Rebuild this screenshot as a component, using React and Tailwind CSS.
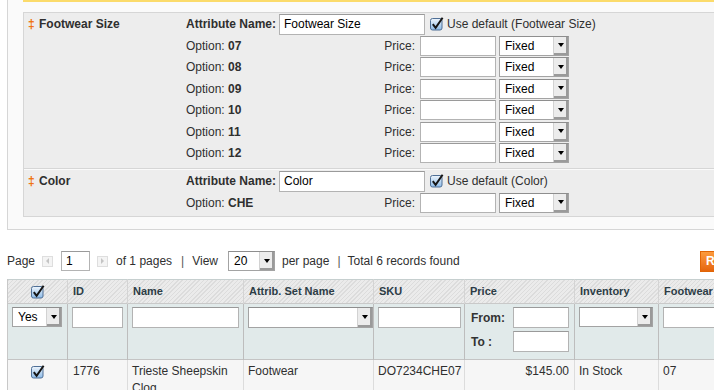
import React from "react";

function Check() {
  return (
    <svg width="14" height="14" viewBox="0 0 14 14" className="shrink-0">
      <defs>
        <linearGradient id="cbg" x1="0" y1="0" x2="0" y2="1">
          <stop offset="0" stopColor="#eef5fc" />
          <stop offset="1" stopColor="#8dbbe8" />
        </linearGradient>
      </defs>
      <rect x="0.5" y="1.5" width="11.5" height="11.5" rx="2" fill="url(#cbg)" stroke="#4f6f96" />
      <path d="M2.8 7.2 L5.6 10.8 L12.6 0.8" fill="none" stroke="#151515" strokeWidth="2" />
    </svg>
  );
}

function Sel({ className, text }) {
  return (
    <div className={"flex items-stretch bg-white border border-[#a3a3a3] border-t-[#8e8e8e] " + className}>
      <div className="flex-1 flex items-center pl-[5px] text-[12px] text-black leading-none">{text}</div>
      <div className="w-[15px] flex items-center justify-center bg-[#ececec] border-l border-[#d2d2d2] shadow-[inset_-2px_-2px_0_#9a9a9a]">
        <div className="w-0 h-0 border-l-[3px] border-r-[3px] border-t-[4px] border-l-transparent border-r-transparent border-t-black -mt-[1px] -ml-[1px]" />
      </div>
    </div>
  );
}

function Inp({ className, value }) {
  return (
    <div className={"bg-white border border-[#b3b3b3] border-t-[#9a9a9a] flex items-center pl-[4px] text-[12px] text-black leading-none " + className}>
      {value}
    </div>
  );
}

function OptionRow({ code }) {
  return (
    <div className="flex items-center h-[21.5px]">
      <span className="w-[195px]">
        Option: <b>{code}</b>
      </span>
      <span className="w-[34px] text-right">Price:</span>
      <Inp className="ml-[5px] w-[76px] h-[20px]" />
      <Sel className="ml-[3px] w-[70px] h-[20px]" text="Fixed" />
    </div>
  );
}

function Section({ title, attr, options, extra }) {
  return (
    <div className={"flex " + extra}>
      <div className="w-[162px] pl-[4px] h-[21.5px] flex items-center font-bold">
        <span className="text-[#f0700a] w-[11px] text-[12px]">‡</span>
        <span>{title}</span>
      </div>
      <div className="flex flex-col">
        <div className="flex items-center h-[21.5px]">
          <span className="w-[93px] font-bold">Attribute Name:</span>
          <Inp className="w-[146px] h-[21px]" value={attr} />
          <span className="ml-[5px] mr-[3px] flex items-center">
            <Check />
          </span>
          <span>Use default ({attr})</span>
        </div>
        {options.map((o) => (
          <OptionRow key={o} code={o} />
        ))}
      </div>
    </div>
  );
}

function PagerArrow({ dir }) {
  return (
    <div className="w-[11px] h-[11px] bg-[#f4f4f4] border border-[#dedede] flex items-center justify-center">
      {dir === "l" ? (
        <div className="w-0 h-0 border-t-[3px] border-b-[3px] border-r-[3px] border-t-transparent border-b-transparent border-r-[#c4c4c4]" />
      ) : (
        <div className="w-0 h-0 border-t-[3px] border-b-[3px] border-l-[3px] border-t-transparent border-b-transparent border-l-[#c4c4c4]" />
      )}
    </div>
  );
}

export default function App() {
  const th = "border-l border-[#f7f7f7] border-r border-r-[#d4d4d4] text-left pl-[5px] font-bold text-[11px] text-[#2d3d46] h-[24px]";
  const tf = "border-l border-[#bdbdbd] align-top px-[4px] pt-[3px]";
  const td = "border-l border-[#dcdcdc] align-top px-[5px] pt-[3px] leading-[17px]";
  return (
    <div className="w-[714px] h-[390px] overflow-hidden bg-white font-['Liberation_Sans',Arial,sans-serif] text-[12px] text-[#2f2f2f]">
      {/* fieldset */}
      <div className="ml-[7px] w-[740px] h-[230px] bg-[#fafafa] border-l border-b border-[#d6d6d6] pl-[15px]">
        <div className="h-[2px] bg-[#fbdb6b]" />
        <div className="mt-[10px] border border-[#d6d6d6] bg-[#ededed]">
          <Section
            title="Footwear Size"
            attr="Footwear Size"
            options={["07", "08", "09", "10", "11", "12"]}
            extra="pt-[0.5px] pb-[3.5px]"
          />
          <div className="border-t border-[#d6d6d6] shadow-[inset_0_1px_0_#fafafa]">
            <Section title="Color" attr="Color" options={["CHE"]} extra="pt-[2px] pb-[2.5px]" />
          </div>
        </div>
      </div>

      {/* pager */}
      <div className="mt-[21px] pl-[7px] w-[794px] h-[20px] flex items-center">
        <span>Page</span>
        <span className="ml-[7px]">
          <PagerArrow dir="l" />
        </span>
        <Inp className="ml-[8px] w-[29px] h-[20px]" value="1" />
        <span className="ml-[7px]">
          <PagerArrow dir="r" />
        </span>
        <span className="ml-[8px]">of 1 pages</span>
        <span className="ml-[9px] text-[#555]">|</span>
        <span className="ml-[8px]">View</span>
        <Sel className="ml-[10px] w-[47px] h-[20px]" text="20" />
        <span className="ml-[7px]">per page</span>
        <span className="ml-[8px] text-[#555]">|</span>
        <span className="ml-[7px]">Total 6 records found</span>
        <div className="ml-auto w-[94px] h-[21px] bg-gradient-to-b from-[#fc9a3c] to-[#e5650a] border border-[#e06506] text-white font-bold flex items-center pl-[5px]">
          Reset Filter
        </div>
      </div>

      {/* grid */}
      <table className="mt-[8px] ml-[7px] table-fixed border-collapse w-[751px] border-t border-[#c6cfcf]">
        <colgroup>
          <col className="w-[60px]" />
          <col className="w-[60px]" />
          <col className="w-[116px]" />
          <col className="w-[130px]" />
          <col className="w-[91px]" />
          <col className="w-[110px]" />
          <col className="w-[84px]" />
          <col className="w-[100px]" />
        </colgroup>
        <thead>
          <tr className="bg-[image:repeating-linear-gradient(135deg,#dcdcdc_0px,#dcdcdc_1px,#ebebeb_1px,#ebebeb_3px)] border-b border-[#c9c9c9]">
            <th className={th + " !border-l-[#c8c8c8] !pl-0"}>
              <div className="flex justify-center">
                <Check />
              </div>
            </th>
            <th className={th}>ID</th>
            <th className={th}>Name</th>
            <th className={th}>Attrib. Set Name</th>
            <th className={th}>SKU</th>
            <th className={th}>Price</th>
            <th className={th}>Inventory</th>
            <th className={th}>Footwear</th>
          </tr>
        </thead>
        <tbody>
          <tr className="bg-[#e1eaea] h-[56px] border-b border-[#c4c4c4]">
            <td className={tf + " !border-l-[#c8c8c8]"}>
              <Sel className="w-[50px] h-[20px]" text="Yes" />
            </td>
            <td className={tf}>
              <Inp className="w-[51px] h-[21px]" />
            </td>
            <td className={tf}>
              <Inp className="w-[107px] h-[21px]" />
            </td>
            <td className={tf}>
              <Sel className="w-[125px] h-[21px]" text="" />
            </td>
            <td className={tf}>
              <Inp className="w-[83px] h-[21px]" />
            </td>
            <td className={tf + " pl-[6px]"}>
              <div className="flex items-center h-[21px]">
                <span className="w-[42px] font-bold text-[#333]">From:</span>
                <Inp className="w-[56px] h-[21px]" />
              </div>
              <div className="flex items-center h-[21px] mt-[3px]">
                <span className="w-[42px] font-bold text-[#333]">To :</span>
                <Inp className="w-[56px] h-[21px]" />
              </div>
            </td>
            <td className={tf}>
              <Sel className="w-[74px] h-[20px]" text="" />
            </td>
            <td className={tf}>
              <Inp className="w-[90px] h-[21px]" />
            </td>
          </tr>
          <tr className="bg-[#f6f6f6]">
            <td className={td + " !border-l-[#c8c8c8]"}>
              <div className="flex justify-center pt-[2px]">
                <Check />
              </div>
            </td>
            <td className={td}>1776</td>
            <td className={td + " pl-[4px]"}>Trieste Sheepskin Clog</td>
            <td className={td + " pl-[4px]"}>Footwear</td>
            <td className={td + " pl-[4px]"}>DO7234CHE07</td>
            <td className={td + " text-right pr-[5px]"}>$145.00</td>
            <td className={td + " pl-[4px]"}>In Stock</td>
            <td className={td + " pl-[4px]"}>07</td>
          </tr>
        </tbody>
      </table>
    </div>
  );
}
